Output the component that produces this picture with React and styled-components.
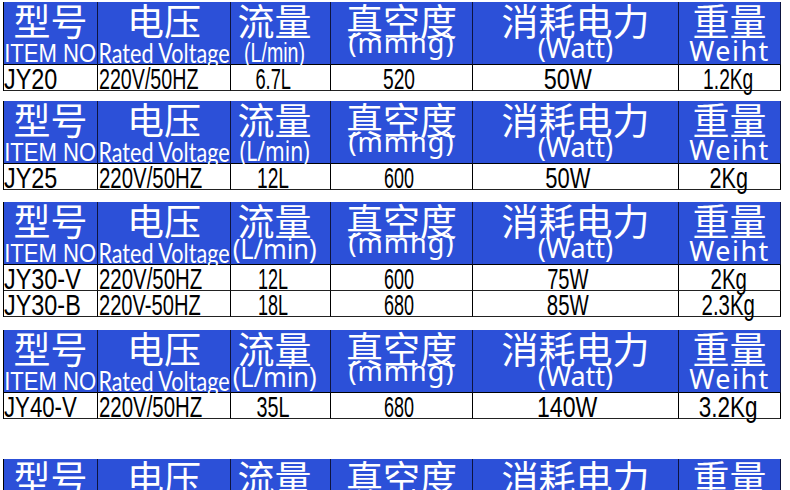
import React from 'react';
import styled, { createGlobalStyle } from 'styled-components';

const Global = createGlobalStyle`
  html, body { margin: 0; padding: 0; background: #fff; overflow: hidden; }
  body { font-family: "Liberation Sans", Arial, sans-serif; }
`;

const BLUE = '#2c50d8';
const NOTO = '"Noto Sans", "Open Sans", sans-serif';
const ARIAL = '"Liberation Sans", Arial, sans-serif';

const Page = styled.div`
  width: 790px;
  height: 490px;
  overflow: hidden;
  box-sizing: border-box;
  padding: 2px 0 0 3px;
`;

const Table = styled.section`
  width: 778px;
  margin-top: ${(p) => p.$gap}px;
  display: grid;
  grid-template-columns: 94px 133px 100px 142px 206px 102px;
  border-left: 1px solid #000;
  box-sizing: border-box;
`;

const HeadCell = styled.div`
  height: 63px;
  box-sizing: border-box;
  background: ${BLUE};
  border-right: 1px solid #0d1440;
  border-bottom: 1px solid #000;
  color: #fff;
  display: flex;
  flex-direction: column;
  align-items: center;
  padding-right: ${(p) => p.$pr || 0}px;
`;

const Zh = styled.div`
  font-family: "Noto Sans CJK SC", sans-serif;
  font-size: 37px;
  line-height: 37px;
  height: 40px;
  white-space: nowrap;
`;

const En = styled.div`
  font-family: ${(p) => p.$font};
  font-weight: ${(p) => p.$weight || 400};
  font-size: ${(p) => p.$size}px;
  line-height: 22px;
  height: 22px;
  margin-top: ${(p) => p.$shift || 0}px;
  letter-spacing: ${(p) => p.$ls || 0}px;
  transform: scaleX(${(p) => p.$sx || 1});
  white-space: nowrap;
  position: relative;
  z-index: 1;
`;

const Cell = styled.div`
  height: 26px;
  box-sizing: border-box;
  background: #fff;
  border-right: 1px solid #000;
  border-bottom: 1px solid #222;
  display: flex;
  align-items: flex-start;
  justify-content: ${(p) => (p.$left ? 'flex-start' : 'center')};
  padding-left: ${(p) => p.$pl || 0}px;
  padding-right: ${(p) => p.$pr || 0}px;
  padding-top: 1px;
`;

const Value = styled.span`
  display: inline-block;
  position: relative;
  z-index: 1;
  font-family: ${ARIAL};
  font-size: 30px;
  line-height: 25px;
  color: #000;
  white-space: nowrap;
  transform: scaleX(${(p) => p.$sx});
  transform-origin: ${(p) => (p.$left ? 'left' : 'center')};
`;

const lminNarrow = { font: ARIAL, size: 28, sx: 0.7, shift: 0 };
const lminMid = { font: NOTO, size: 27, sx: 0.78, shift: -1 };
const lminWide = { font: NOTO, size: 27, sx: 0.94, shift: -4 };

const headers = (lmin) => [
  { zh: '型号', en: 'ITEM NO', font: ARIAL, size: 26, sx: 0.85, shift: 1 },
  { zh: '电压', en: 'Rated Voltage', font: 'Lato, sans-serif', weight: 400, size: 27, sx: 0.8, shift: 0 },
  { zh: '流量', en: '(L/min)', pr: 12, ...lmin },
  { zh: '真空度', en: '(mmhg)', font: NOTO, size: 27, ls: 1, shift: -10 },
  { zh: '消耗电力', en: '(Watt)', font: NOTO, size: 27, shift: -5 },
  { zh: '重量', en: 'Weiht', font: NOTO, size: 27, ls: 1.5, shift: -2 },
];

const colAlign = [
  { left: true, pl: 0 },
  { left: true, pl: 1 },
  { pr: 14 },
  { pr: 5 },
  { pr: 16 },
  { pr: 2 },
];

const tables = [
  {
    gap: 0,
    lmin: lminNarrow,
    rows: [[['JY20', 0.78], ['220V/50HZ', 0.655], ['6.7L', 0.61], ['520', 0.64], ['50W', 0.78], ['1.2Kg', 0.64]]],
  },
  {
    gap: 10,
    lmin: lminMid,
    rows: [[['JY25', 0.78], ['220V/50HZ', 0.68], ['12L', 0.64], ['600', 0.6], ['50W', 0.73], ['2Kg', 0.72]]],
  },
  {
    gap: 12,
    lmin: lminWide,
    rows: [
      [['JY30-V', 0.78], ['220V/50HZ', 0.68], ['12L', 0.6], ['600', 0.6], ['75W', 0.67], ['2Kg', 0.68]],
      [['JY30-B', 0.78], ['220V-50HZ', 0.67], ['18L', 0.6], ['680', 0.6], ['85W', 0.68], ['2.3Kg', 0.68]],
    ],
  },
  {
    gap: 13,
    lmin: lminWide,
    rows: [[['JY40-V', 0.74], ['220V/50HZ', 0.68], ['35L', 0.66], ['680', 0.6], ['140W', 0.77], ['3.2Kg', 0.75]]],
  },
  { gap: 40, lmin: lminWide, rows: [] },
];

function SpecTable({ gap, lmin, rows }) {
  return (
    <Table $gap={gap}>
      {headers(lmin).map((h) => (
        <HeadCell key={h.zh} $pr={h.pr}>
          <Zh>{h.zh}</Zh>
          <En $font={h.font} $weight={h.weight} $size={h.size} $sx={h.sx} $shift={h.shift} $ls={h.ls}>
            {h.en}
          </En>
        </HeadCell>
      ))}
      {rows.map((row, ri) =>
        row.map(([text, sx], ci) => {
          const a = colAlign[ci];
          return (
            <Cell key={`${ri}-${ci}`} $left={a.left} $pl={a.pl} $pr={a.pr}>
              <Value $sx={sx} $left={a.left}>{text}</Value>
            </Cell>
          );
        })
      )}
    </Table>
  );
}

export default function App() {
  return (
    <Page>
      <Global />
      {tables.map((t, i) => (
        <SpecTable key={i} gap={t.gap} lmin={t.lmin} rows={t.rows} />
      ))}
    </Page>
  );
}
